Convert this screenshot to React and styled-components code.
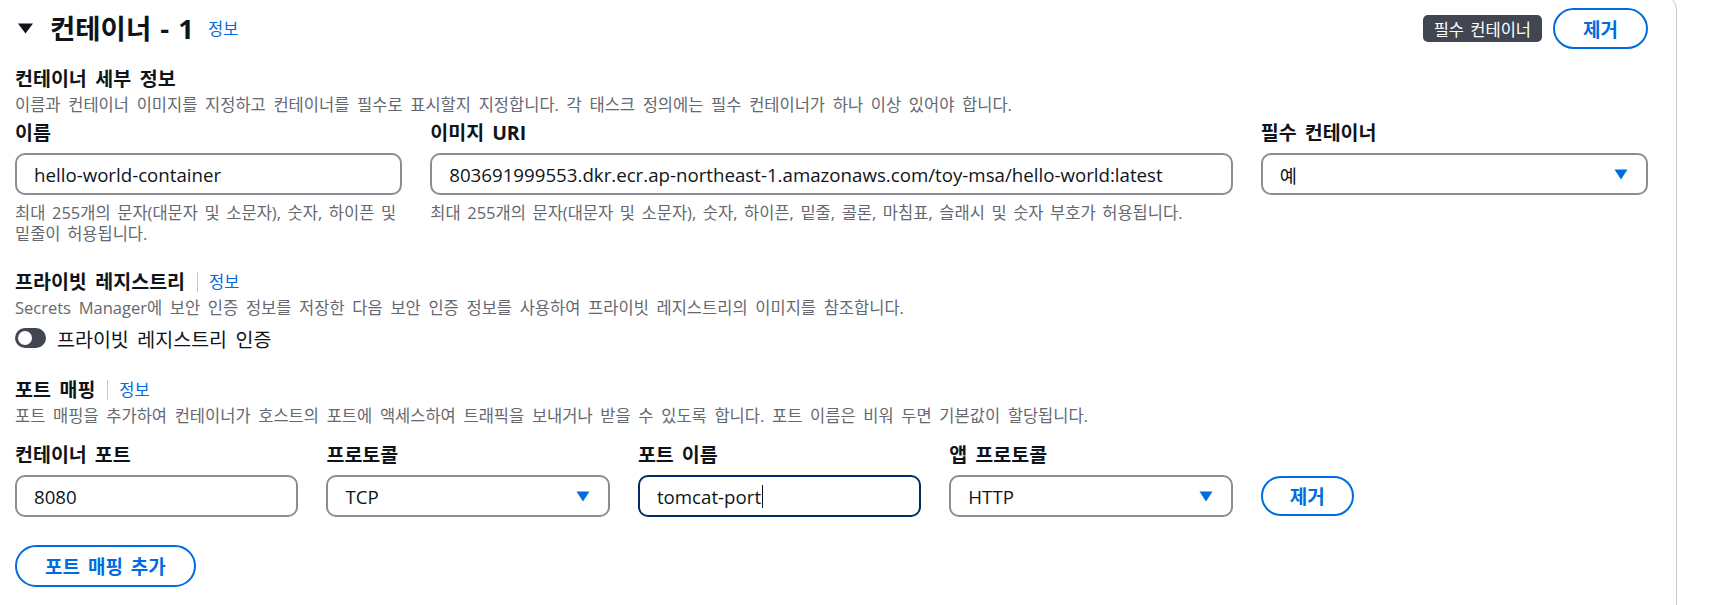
import React from 'react';
import styled, { createGlobalStyle } from 'styled-components';

const GlobalStyle = createGlobalStyle`
  html, body { margin: 0; padding: 0; background: #ffffff; }
  body {
    font-family: "Open Sans", "Noto Sans CJK KR", sans-serif;
    color: #0f141a;
    overflow: hidden;
  }
`;

const Page = styled.div`
  width: 1711px;
  height: 605px;
  overflow: hidden;
  background: #ffffff;
`;

const Card = styled.section`
  box-sizing: border-box;
  width: 1697px;
  margin: -6px 0 0 -20px;
  border: 1px solid #c6c6cd;
  border-radius: 16px;
  padding: 13px 28px 60px 34px;
  background: #ffffff;
`;

const HeaderRow = styled.div`
  display: flex;
  align-items: center;
  justify-content: space-between;
  height: 41px;
`;

const HeaderLeft = styled.div`
  display: flex;
  align-items: center;
  padding-left: 3px;
`;

const Title = styled.h2`
  margin: 0 14px 0 17px;
  font-size: 27.5px;
  line-height: 32px;
  font-weight: 700;
  word-spacing: 2px;
`;

const InfoLink = styled.a`
  font-size: 16.5px;
  line-height: 20px;
  color: #006ce0;
  text-decoration: none;
  font-weight: 400;
`;

const HeaderRight = styled.div`
  display: flex;
  align-items: center;
  gap: 11px;
`;

const Badge = styled.span`
  box-sizing: border-box;
  height: 27px;
  padding: 0 11px;
  display: inline-flex;
  align-items: center;
  background: #424650;
  color: #ffffff;
  border-radius: 5px;
  font-size: 16.5px;
  word-spacing: 2px;
`;

const PillButton = styled.button`
  box-sizing: border-box;
  height: ${p => p.$h || 41}px;
  padding: 0 ${p => p.$px || 28}px;
  border: 2px solid #006ce0;
  border-radius: 21px;
  background: #ffffff;
  color: #006ce0;
  font-family: inherit;
  font-size: 19px;
  font-weight: 700;
  word-spacing: 3px;
  cursor: pointer;
`;

const SectionTitle = styled.div`
  display: flex;
  align-items: center;
  margin-top: ${p => p.$mt}px;
  font-size: 19.5px;
  line-height: 24px;
  font-weight: 700;
  word-spacing: 3.5px;
`;

const Divider = styled.span`
  width: 1px;
  height: 20px;
  background: #c6c6cd;
  margin: 0 11px 0 12px;
`;

const Description = styled.p`
  margin: ${p => p.$mt}px 0 0;
  font-size: 16.5px;
  line-height: 20px;
  color: #656871;
  word-spacing: 3.4px;
`;

const Grid = styled.div`
  display: grid;
  grid-template-columns: repeat(12, 1fr);
  column-gap: 28px;
  margin-top: ${p => p.$mt}px;
`;

const FormField = styled.div`
  grid-column: span ${p => p.$span};
  display: flex;
  flex-direction: column;
  min-width: 0;
`;

const PortFields = styled.div`
  grid-column: span 9;
  display: grid;
  grid-template-columns: repeat(4, 1fr);
  column-gap: 28px;
`;

const RemoveCell = styled.div`
  grid-column: span 3;
  display: flex;
  align-items: flex-end;
  padding-bottom: 1px;
`;

const Label = styled.label`
  font-size: 19.5px;
  line-height: 24px;
  font-weight: 700;
  word-spacing: 3px;
  margin-bottom: 8px;
`;

const Field = styled.div`
  box-sizing: border-box;
  height: 42px;
  border: 2px solid ${p => (p.$focused ? '#002b66' : '#8c8c94')};
  border-radius: 10px;
  padding: 0 18px 0 17px;
  display: flex;
  align-items: center;
  justify-content: space-between;
  font-size: 18.7px;
  color: #0f141a;
  background: #ffffff;
  white-space: nowrap;
`;

const Value = styled.span`
  display: inline-flex;
  align-items: center;
`;

const TextCaret = styled.span`
  display: inline-block;
  width: 1px;
  height: 23px;
  background: #0f141a;
  margin-left: 1px;
`;

const Hint = styled.div`
  margin-top: 7px;
  font-size: 16.5px;
  line-height: 21px;
  color: #656871;
  word-spacing: 2.3px;
`;

const ToggleRow = styled.label`
  display: flex;
  align-items: center;
  gap: 11px;
  margin-top: 8px;
  height: 24px;
  font-size: 19.5px;
  word-spacing: 3.5px;
`;

const ToggleTrack = styled.span`
  box-sizing: border-box;
  width: 31px;
  height: 20px;
  border-radius: 10px;
  background: #424650;
  display: inline-flex;
  align-items: center;
  padding: 0 3px;
`;

const Knob = styled.span`
  width: 14px;
  height: 14px;
  border-radius: 50%;
  background: #ffffff;
`;

const AddRow = styled.div`
  margin-top: 28px;
`;

const ExpandIcon = () => (
  <svg width="15" height="11" viewBox="0 0 15 11" aria-hidden="true">
    <path d="M0 0.5h15L7.5 10.5z" fill="#0f141a" />
  </svg>
);

const SelectCaret = () => (
  <svg width="14" height="11" viewBox="0 0 14 11" aria-hidden="true">
    <path d="M0.5 0.5h13L7 10.5z" fill="#006ce0" />
  </svg>
);

const Select = ({ value }) => (
  <Field>
    <Value>{value}</Value>
    <SelectCaret />
  </Field>
);

export default function App() {
  return (
    <Page>
      <GlobalStyle />
      <Card>
        <HeaderRow>
          <HeaderLeft>
            <ExpandIcon />
            <Title>컨테이너 - 1</Title>
            <InfoLink href="#">정보</InfoLink>
          </HeaderLeft>
          <HeaderRight>
            <Badge>필수 컨테이너</Badge>
            <PillButton>제거</PillButton>
          </HeaderRight>
        </HeaderRow>

        <SectionTitle $mt={18}>컨테이너 세부 정보</SectionTitle>
        <Description $mt={4}>
          이름과 컨테이너 이미지를 지정하고 컨테이너를 필수로 표시할지 지정합니다. 각 태스크 정의에는 필수 컨테이너가 하나 이상 있어야 합니다.
        </Description>

        <Grid $mt={6}>
          <FormField $span={3}>
            <Label>이름</Label>
            <Field>
              <Value>hello-world-container</Value>
            </Field>
            <Hint>최대 255개의 문자(대문자 및 소문자), 숫자, 하이픈 및 밑줄이 허용됩니다.</Hint>
          </FormField>
          <FormField $span={6}>
            <Label>이미지 URI</Label>
            <Field>
              <Value>803691999553.dkr.ecr.ap-northeast-1.amazonaws.com/toy-msa/hello-world:latest</Value>
            </Field>
            <Hint>최대 255개의 문자(대문자 및 소문자), 숫자, 하이픈, 밑줄, 콜론, 마침표, 슬래시 및 숫자 부호가 허용됩니다.</Hint>
          </FormField>
          <FormField $span={3}>
            <Label>필수 컨테이너</Label>
            <Select value="예" />
          </FormField>
        </Grid>

        <SectionTitle $mt={26}>
          프라이빗 레지스트리
          <Divider />
          <InfoLink href="#">정보</InfoLink>
        </SectionTitle>
        <Description $mt={4}>
          Secrets Manager에 보안 인증 정보를 저장한 다음 보안 인증 정보를 사용하여 프라이빗 레지스트리의 이미지를 참조합니다.
        </Description>
        <ToggleRow>
          <ToggleTrack>
            <Knob />
          </ToggleTrack>
          프라이빗 레지스트리 인증
        </ToggleRow>

        <SectionTitle $mt={28}>
          포트 매핑
          <Divider />
          <InfoLink href="#">정보</InfoLink>
        </SectionTitle>
        <Description $mt={4}>
          포트 매핑을 추가하여 컨테이너가 호스트의 포트에 액세스하여 트래픽을 보내거나 받을 수 있도록 합니다. 포트 이름은 비워 두면 기본값이 할당됩니다.
        </Description>

        <Grid $mt={17}>
          <PortFields>
            <FormField>
              <Label>컨테이너 포트</Label>
              <Field>
                <Value>8080</Value>
              </Field>
            </FormField>
            <FormField>
              <Label>프로토콜</Label>
              <Select value="TCP" />
            </FormField>
            <FormField>
              <Label>포트 이름</Label>
              <Field $focused>
                <Value>
                  tomcat-port
                  <TextCaret />
                </Value>
              </Field>
            </FormField>
            <FormField>
              <Label>앱 프로토콜</Label>
              <Select value="HTTP" />
            </FormField>
          </PortFields>
          <RemoveCell>
            <PillButton $h={40} $px={27}>제거</PillButton>
          </RemoveCell>
        </Grid>

        <AddRow>
          <PillButton $h={42}>포트 매핑 추가</PillButton>
        </AddRow>
      </Card>
    </Page>
  );
}
